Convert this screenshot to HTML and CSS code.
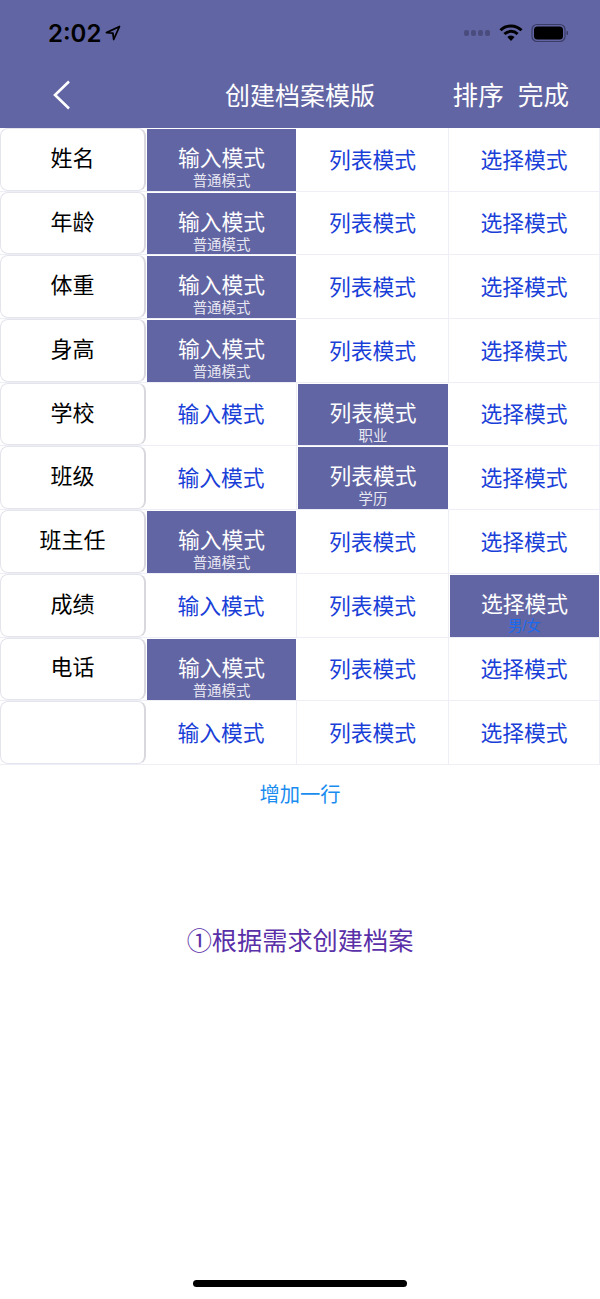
FILE: index.html
```html
<!DOCTYPE html>
<html lang="zh-CN">
<head>
    <meta charset="UTF-8">
    <title>创建档案模版</title>
    <link rel="stylesheet" href="styles.css">
</head>
<body>
    <div id="wrap">
        <div class="header">
            <div class="status">
                <div class="clock">
                    <span>2:02</span>
                    <svg width="16" height="16" viewBox="0 0 16 16"><path d="M14.500 1.500 1.500 7.600l6.400.6.8 6.300z" fill="none" stroke="#000" stroke-width="1.800" stroke-linejoin="round"/></svg>
                </div>
                <div class="signal">
                    <i></i><i></i><i></i><i></i>
                    <svg class="wifi" width="24" height="18" viewBox="0 0 24 18"><path d="M1.500 6.200a15 15 0 0 1 21 0M5.400 10a9.600 9.600 0 0 1 13.200 0" fill="none" stroke="#000" stroke-width="3"/><path d="M8.400 13a5 5 0 0 1 7.200 0L12 17z" fill="#000"/></svg>
                    <svg width="38" height="20" viewBox="0 0 38 20"><rect x="1" y="1.500" width="33" height="17" rx="5" fill="none" stroke="#3a3c66" stroke-width="1.200"/><rect x="3" y="3.500" width="29" height="13" rx="3.500" fill="#000"/><rect x="35.500" y="8" width="1.500" height="4" rx=".7" fill="#3a3c66"/></svg>
                </div>
            </div>
            <div class="nav">
                <svg class="back" width="20" height="30" viewBox="0 0 20 30"><path d="M17 1.500 3 15l14 13.500" fill="none" stroke="#fff" stroke-width="2.600"/></svg>
                <h1>创建档案模版</h1>
                <div class="actions"><span>排序</span><span>完成</span></div>
            </div>
        </div>

        <div class="table">
            <div class="row">
                <div class="name">姓名</div>
                <div class="cell active"><b>输入模式</b><small>普通模式</small></div>
                <div class="cell"><b>列表模式</b></div>
                <div class="cell"><b>选择模式</b></div>
            </div>
            <div class="row">
                <div class="name">年龄</div>
                <div class="cell active"><b>输入模式</b><small>普通模式</small></div>
                <div class="cell"><b>列表模式</b></div>
                <div class="cell"><b>选择模式</b></div>
            </div>
            <div class="row">
                <div class="name">体重</div>
                <div class="cell active"><b>输入模式</b><small>普通模式</small></div>
                <div class="cell"><b>列表模式</b></div>
                <div class="cell"><b>选择模式</b></div>
            </div>
            <div class="row">
                <div class="name">身高</div>
                <div class="cell active"><b>输入模式</b><small>普通模式</small></div>
                <div class="cell"><b>列表模式</b></div>
                <div class="cell"><b>选择模式</b></div>
            </div>
            <div class="row">
                <div class="name">学校</div>
                <div class="cell"><b>输入模式</b></div>
                <div class="cell active"><b>列表模式</b><small>职业</small></div>
                <div class="cell"><b>选择模式</b></div>
            </div>
            <div class="row">
                <div class="name">班级</div>
                <div class="cell"><b>输入模式</b></div>
                <div class="cell active"><b>列表模式</b><small>学历</small></div>
                <div class="cell"><b>选择模式</b></div>
            </div>
            <div class="row">
                <div class="name">班主任</div>
                <div class="cell active"><b>输入模式</b><small>普通模式</small></div>
                <div class="cell"><b>列表模式</b></div>
                <div class="cell"><b>选择模式</b></div>
            </div>
            <div class="row">
                <div class="name">成绩</div>
                <div class="cell"><b>输入模式</b></div>
                <div class="cell"><b>列表模式</b></div>
                <div class="cell active"><b>选择模式</b><small class="blue">男/女</small></div>
            </div>
            <div class="row">
                <div class="name">电话</div>
                <div class="cell active"><b>输入模式</b><small>普通模式</small></div>
                <div class="cell"><b>列表模式</b></div>
                <div class="cell"><b>选择模式</b></div>
            </div>
            <div class="row">
                <div class="name"></div>
                <div class="cell"><b>输入模式</b></div>
                <div class="cell"><b>列表模式</b></div>
                <div class="cell"><b>选择模式</b></div>
            </div>
        </div>

        <div class="add">增加一行</div>
        <div class="tip">①根据需求创建档案</div>
        <div class="home"></div>
    </div>
</body>
</html>
```

FILE: styles.css
```css
*{margin:0;padding:0;box-sizing:border-box;}
body{
    background:#fff;
    font-family:"Liberation Sans","Noto Sans CJK SC",sans-serif;
}
#wrap{
    display:flex;
    flex-direction:column;
    width:600px;
    height:1299px;
    overflow:hidden;
}
.header{
    height:128px;
    background:#6265a3;
}
.status{
    display:flex;
    justify-content:space-between;
    align-items:center;
    height:66px;
    padding:0 31px 0 48px;
}
.clock{
    display:flex;
    align-items:center;
    gap:4px;
    font-size:24px;
    font-family:Inter,"Liberation Sans",sans-serif;
    font-weight:600;
    color:#000;
}
.signal{
    display:flex;
    align-items:center;
}
.signal i{
    width:5px;
    height:6px;
    margin-right:2px;
    border-radius:2px;
    background:#4a4c7e;
}
.wifi{margin:0 8px 0 7px;}
.nav{
    display:flex;
    align-items:center;
    position:relative;
    height:58px;
    padding:0 31px 0 52px;
    color:#fff;
}
.back{flex:none;}
.nav h1{
    position:absolute;
    left:0;
    right:0;
    padding-bottom:2px;
    text-align:center;
    font-size:25px;
    font-weight:400;
}
.actions{
    display:flex;
    gap:14px;
    margin-left:auto;
    padding-bottom:4px;
    font-size:25.600px;
}
.row{
    display:grid;
    grid-template-columns:146px 151px 152px 1fr;
    height:63.700px;
    border-bottom:1px solid #eeeff6;
}
.name{
    display:flex;
    align-items:center;
    justify-content:center;
    padding-bottom:7px;
    border:1px solid #e4e4ec;
    border-right:2px solid #d8d8de;
    border-radius:8px;
    font-size:22px;
    color:#000;
}
.cell{
    display:flex;
    flex-direction:column;
    align-items:center;
    justify-content:flex-end;
    padding-bottom:14px;
    border-right:1px solid #eeeff6;
    font-size:21.800px;
    color:#1a3fd8;
}
.cell b{
    font-weight:400;
    line-height:32px;
}
.cell.active{
    justify-content:flex-start;
    padding:15px 0 0;
    margin:1px 1px 0 1px;
    border-right:0;
    background:#6265a3;
    color:#fff;
}
.cell.active b{line-height:30px;}
.cell small{
    font-size:14.400px;
    line-height:14px;
    color:#e8e8f2;
}
.cell small.blue{
    margin-top:-1px;
    color:#1a6af0;
}
.add{
    margin-top:15px;
    text-align:center;
    font-size:20.300px;
    line-height:30px;
    color:#1a8cf0;
}
.tip{
    margin-top:113px;
    text-align:center;
    font-size:25.200px;
    line-height:36px;
    color:#5a30a8;
}
.home{
    width:214px;
    height:7px;
    margin:auto auto 12px;
    border-radius:4px;
    background:#000;
}
```
